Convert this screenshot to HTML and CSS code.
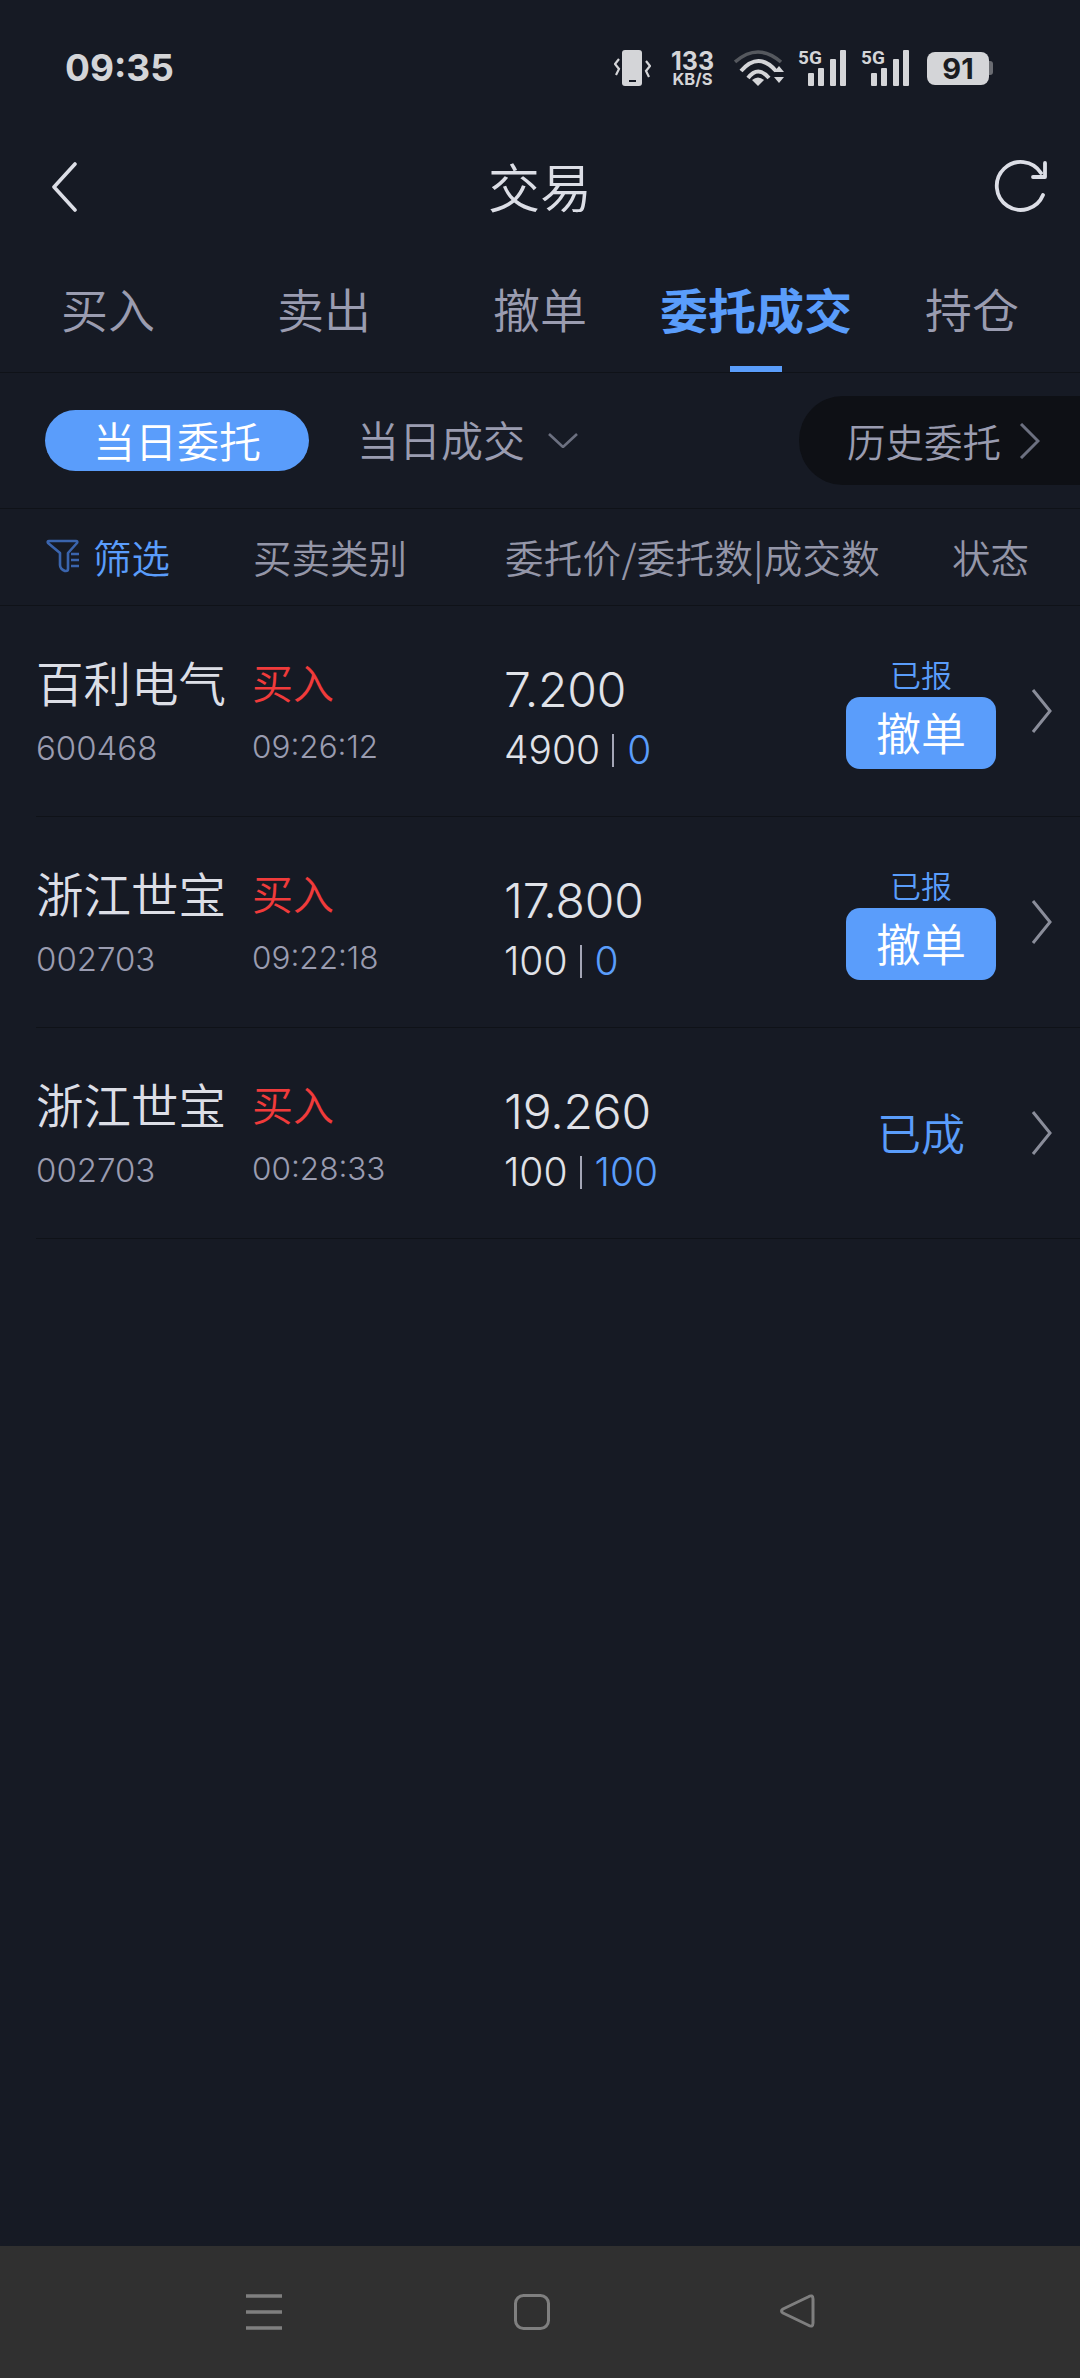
FILE: index.html
```html
<!DOCTYPE html>
<html lang="zh">
<head>
<meta charset="utf-8">
<title>交易</title>
<link rel="stylesheet" href="styles.css">
</head>
<body>
<div class="screen">
  <header class="status">
    <span class="clock">09:35</span>
    <div class="status-icons">
      <svg class="ic-vib" width="37" height="36" viewBox="0 0 37 36"><rect x="8" y="0" width="20" height="36" rx="3" fill="#d4d5d8"/><rect x="15" y="30" width="7" height="2" fill="#161a24"/><path d="M5 9 L1 14 L5 19 L2 25 M32 11 L36 16 L32 21 L35 27" fill="none" stroke="#d4d5d8" stroke-width="2.2"/></svg>
      <div class="speed"><b>133</b><small>KB/S</small></div>
      <svg class="ic-wifi" width="50" height="36" viewBox="0 0 50 36"><path d="M1 12 Q24 -8 47 12" fill="none" stroke="#55585e" stroke-width="3.6"/><path d="M7 21 Q24.5 1 42 21 M14 28 Q24 15 35 28" fill="none" stroke="#d4d5d8" stroke-width="4"/><path d="M18 30 Q24 25 30 30 L24 36Z" fill="#d4d5d8"/><path d="M40 22 L45 16 L50 22Z M40 27 L50 27 L45 33Z" fill="#d4d5d8"/></svg>
      <div class="sig"><span class="g5">5G</span><svg class="bars" width="38" height="36" viewBox="0 0 38 36"><rect x="0" y="23" width="6" height="13" rx="1"/><rect x="10" y="18" width="6" height="18" rx="1"/><rect x="22" y="9" width="6" height="27" rx="1"/><rect x="32" y="0" width="6" height="36" rx="1"/></svg></div>
      <div class="sig sig-last"><span class="g5">5G</span><svg class="bars" width="38" height="36" viewBox="0 0 38 36"><rect x="0" y="23" width="6" height="13" rx="1"/><rect x="10" y="18" width="6" height="18" rx="1"/><rect x="22" y="9" width="6" height="27" rx="1"/><rect x="32" y="0" width="6" height="36" rx="1"/></svg></div>
      <div class="battery"><span class="batt-body">91</span><span class="batt-tip"></span></div>
    </div>
  </header>

  <nav class="titlebar">
    <svg class="back" width="27" height="50" viewBox="0 0 27 50"><path d="M25 2 L4 25 L25 48" fill="none" stroke="#dcdee6" stroke-width="3.6" stroke-linecap="round" stroke-linejoin="round"/></svg>
    <h1 class="title">交易</h1>
    <svg class="refresh" width="54" height="54" viewBox="0 0 54 54"><path d="M50 37 A24 24 0 1 1 48 15" fill="none" stroke="#dcdee6" stroke-width="3.8" stroke-linecap="round"/><path d="M52 5 V19 H40" fill="none" stroke="#dcdee6" stroke-width="3.8" stroke-linecap="round" stroke-linejoin="round"/></svg>
  </nav>

  <div class="tabs">
    <div class="tab">买入</div>
    <div class="tab">卖出</div>
    <div class="tab">撤单</div>
    <div class="tab active">委托成交<i class="tab-bar"></i></div>
    <div class="tab">持仓</div>
  </div>

  <div class="subtabs">
    <div class="pill">当日委托</div>
    <div class="sub-item">当日成交</div>
    <svg class="sub-chev" width="30" height="15" viewBox="0 0 30 15"><path d="M1 1 L15 14 L29 1" fill="none" stroke="#6c7080" stroke-width="2.6"/></svg>
    <div class="history"><span>历史委托</span><svg width="21" height="36" viewBox="0 0 21 36"><path d="M2 1 L19 18 L2 35" fill="none" stroke="#6c7080" stroke-width="3"/></svg></div>
  </div>

  <div class="thead">
    <div class="filter">
      <svg width="34" height="34" viewBox="0 0 34 34"><path d="M4 2 H31 Q33 2 32 4 L23 14 V30 Q23 32 21 32 H20 Q15 30 15 26 V14 L3 4 Q2 2 4 2Z" fill="none" stroke="#3a64ad" stroke-width="2.6" stroke-linejoin="round"/><path d="M26 15 H34 M26 21 H34 M26 27 H34" stroke="#3a64ad" stroke-width="2.6"/></svg>
      <span>筛选</span>
    </div>
    <div>买卖类别</div>
    <div class="th-price">委托价/委托数|成交数</div>
    <div>状态</div>
  </div>

  <section class="rows">
    <div class="row">
      <div class="c-name"><div class="name">百利电气</div><div class="code">600468</div></div>
      <div class="c-type"><div class="buy">买入</div><div class="time">09:26:12</div></div>
      <div class="c-num"><div class="price">7.200</div><div class="qty">4900<i class="sep"></i><em>0</em></div></div>
      <div class="c-state"><div class="state-sm">已报</div><button class="cancel">撤单</button></div>
      <svg class="chev" width="21" height="44" viewBox="0 0 21 44"><path d="M2 1 L19 22 L2 43" fill="none" stroke="#8a8d9a" stroke-width="3"/></svg>
    </div>
    <div class="row">
      <div class="c-name"><div class="name">浙江世宝</div><div class="code">002703</div></div>
      <div class="c-type"><div class="buy">买入</div><div class="time">09:22:18</div></div>
      <div class="c-num"><div class="price">17.800</div><div class="qty">100<i class="sep"></i><em>0</em></div></div>
      <div class="c-state"><div class="state-sm">已报</div><button class="cancel">撤单</button></div>
      <svg class="chev" width="21" height="44" viewBox="0 0 21 44"><path d="M2 1 L19 22 L2 43" fill="none" stroke="#8a8d9a" stroke-width="3"/></svg>
    </div>
    <div class="row">
      <div class="c-name"><div class="name">浙江世宝</div><div class="code">002703</div></div>
      <div class="c-type"><div class="buy">买入</div><div class="time">00:28:33</div></div>
      <div class="c-num"><div class="price">19.260</div><div class="qty">100<i class="sep"></i><em>100</em></div></div>
      <div class="c-state"><div class="state-lg">已成</div></div>
      <svg class="chev" width="21" height="44" viewBox="0 0 21 44"><path d="M2 1 L19 22 L2 43" fill="none" stroke="#8a8d9a" stroke-width="3"/></svg>
    </div>
  </section>

  <footer class="sysnav">
    <svg width="36" height="36" viewBox="0 0 36 36"><path d="M0 2 H36 M0 18 H36 M0 34 H36" stroke="#7f7f7f" stroke-width="3.4"/></svg>
    <svg width="36" height="36" viewBox="0 0 36 36"><rect x="1.5" y="1.5" width="33" height="33" rx="8" fill="none" stroke="#7f7f7f" stroke-width="3"/></svg>
    <svg class="nav-back" width="36" height="36" viewBox="0 0 36 36"><path d="M3 15 L28 3 Q33 0 33 5 V29 Q33 34 28 31 L3 19 Q0 17 3 15Z" fill="none" stroke="#7f7f7f" stroke-width="3" stroke-linejoin="round"/></svg>
  </footer>
</div>
</body>
</html>
```

FILE: styles.css
```css
* { box-sizing: border-box; }
html, body { margin: 0; padding: 0; }
body {
  background: #161a24;
  font-family: Inter, "Noto Sans CJK SC", sans-serif;
  color: #dcdee6;
}
.screen { width: 1080px; height: 2378px; display: flex; flex-direction: column; overflow: hidden; }

/* status bar */
.status { height: 136px; flex: none; display: flex; align-items: center; padding-left: 65px; }
.clock { font: 700 37px/40px Inter, sans-serif; color: #d4d5d8; }
.status-icons { margin-left: auto; margin-right: 87px; display: flex; align-items: center; height: 36px; }
.ic-vib { margin-right: 20px; }
.speed { width: 43px; margin-right: 20px; display: flex; flex-direction: column; align-items: center; font-family: Inter, sans-serif; color: #d4d5d8; white-space: nowrap; }
.speed b { font-size: 25px; line-height: 22px; font-weight: 700; }
.speed small { font-size: 16.5px; line-height: 14px; font-weight: 700; }
.ic-wifi { margin-right: 14px; }
.sig { display: flex; align-items: flex-start; width: 48px; margin-right: 15px; height: 36px; }
.sig-last { margin-right: 18px; }
.g5 { font: 700 19px/15px Roboto, sans-serif; color: #d4d5d8; width: 10px; white-space: nowrap; }
.bars { fill: #d4d5d8; }
.battery { display: flex; align-items: center; }
.batt-body { width: 62px; height: 33px; border-radius: 8px; background: #d4d5d8; color: #1a1c22; font: 700 29px/33px Inter, sans-serif; text-align: center; }
.batt-tip { width: 4px; height: 14px; background: #6a6c72; border-radius: 0 3px 3px 0; }

/* title bar */
.titlebar { height: 102px; flex: none; display: grid; grid-template-columns: 1fr auto 1fr; align-items: center; padding: 0 33px; }
.back { justify-self: start; margin-left: 17px; }
.refresh { justify-self: end; margin-bottom: 4px; }
.title { margin: 0 0 3px; font-size: 52px; line-height: 60px; font-weight: 350; color: #dcdee6; font-family: "Noto Sans CJK SC", sans-serif; }

/* tabs */
.tabs { height: 135px; flex: none; display: grid; grid-template-columns: repeat(5, 216px); border-bottom: 1px solid #0f1218; }
.tab { display: flex; flex-direction: column; align-items: center; padding-top: 44px; font: 350 47px/52px "Noto Sans CJK SC", sans-serif; color: #9a9cb0; }
.tab.active { color: #5a9dfb; font-weight: 700; font-size: 48px; }
.tab-bar { display: block; margin-top: auto; width: 52px; height: 6px; background: #5a9dfb; }

/* sub tabs */
.subtabs { height: 136px; flex: none; display: flex; align-items: center; padding-left: 45px; border-bottom: 1px solid #0f1218; font-family: "Noto Sans CJK SC", sans-serif; font-weight: 350; }
.pill { width: 264px; height: 61px; padding-bottom: 2px; border-radius: 31px; background: #5a9dfb; color: #fff; font-size: 42px; line-height: 59px; text-align: center; }
.sub-item { margin: 0 0 3px 48px; font-size: 42px; line-height: 50px; color: #9a9cb0; }
.sub-chev { margin-left: 23px; }
.history { margin-left: auto; width: 281px; height: 89px; border-radius: 44px 0 0 44px; background: #0e1015; padding-left: 48px; display: flex; align-items: center; gap: 18px; font-size: 38.5px; color: #9a9cb0; }
.history span { margin-bottom: 2px; }

/* table head */
.thead { height: 97px; padding: 0 0 2px 45px; flex: none; display: grid; grid-template-columns: 208px 252px 447px auto; align-items: center; border-bottom: 1px solid #0f1218; font: 350 38.5px/44px "Noto Sans CJK SC", sans-serif; color: #9496a8; white-space: nowrap; }
.th-price { letter-spacing: 0.3px; }
.filter { display: flex; align-items: center; gap: 14px; color: #5a9dfb; }

/* rows */
.rows { flex: 1; }
.row { margin-left: 36px; height: 211px; display: grid; grid-template-columns: 216px 252px 342px 150px 56px; align-items: start; border-bottom: 1px solid #0f1218; }
.c-name { padding-top: 50px; }
.name { font: 350 47.5px/52px "Noto Sans CJK SC", sans-serif; color: #dcdee6; white-space: nowrap; }
.code { margin-top: 20px; font-size: 33px; font-weight: 300; line-height: 40px; color: #9a9cb0; }
.c-type { padding-top: 49px; }
.buy { font: 350 41px/52px "Noto Sans CJK SC", sans-serif; color: #f03b3b; }
.time { margin-top: 20px; font-size: 31.5px; font-weight: 300; line-height: 40px; color: #9a9cb0; }
.c-num { padding-top: 56px; }
.price { font-size: 48px; font-weight: 300; letter-spacing: -0.2px; line-height: 56px; color: #e0e2e8; }
.qty { margin-top: 10px; font-size: 39px; font-weight: 300; line-height: 44px; color: #e0e2e8; display: flex; align-items: center; }
.qty em { font-style: normal; color: #5a9dfb; }
.sep { display: block; width: 2px; height: 33px; margin: 0 13px 0 12px; background: #a4a6b6; }
.c-state { padding-top: 50px; display: flex; flex-direction: column; align-items: center; }
.state-sm { font: 350 31px/36px "Noto Sans CJK SC", sans-serif; color: #5a9dfb; }
.cancel { margin-top: 5px; width: 150px; height: 72px; border: 0; padding: 0 0 2px; border-radius: 14px; background: #5a9dfb; color: #fff; font: 350 45px/70px "Noto Sans CJK SC", sans-serif; }
.state-lg { margin-top: 24px; font: 350 44px/60px "Noto Sans CJK SC", sans-serif; color: #5a9dfb; }
.chev { margin: 83px 0 0 35px; }

/* system nav */
.sysnav { height: 132px; flex: none; background: #303030; display: grid; grid-template-columns: 36px 36px 36px; justify-content: start; column-gap: 232px; padding: 48px 0 0 246px; }
.nav-back { margin-left: -2px; }
```
